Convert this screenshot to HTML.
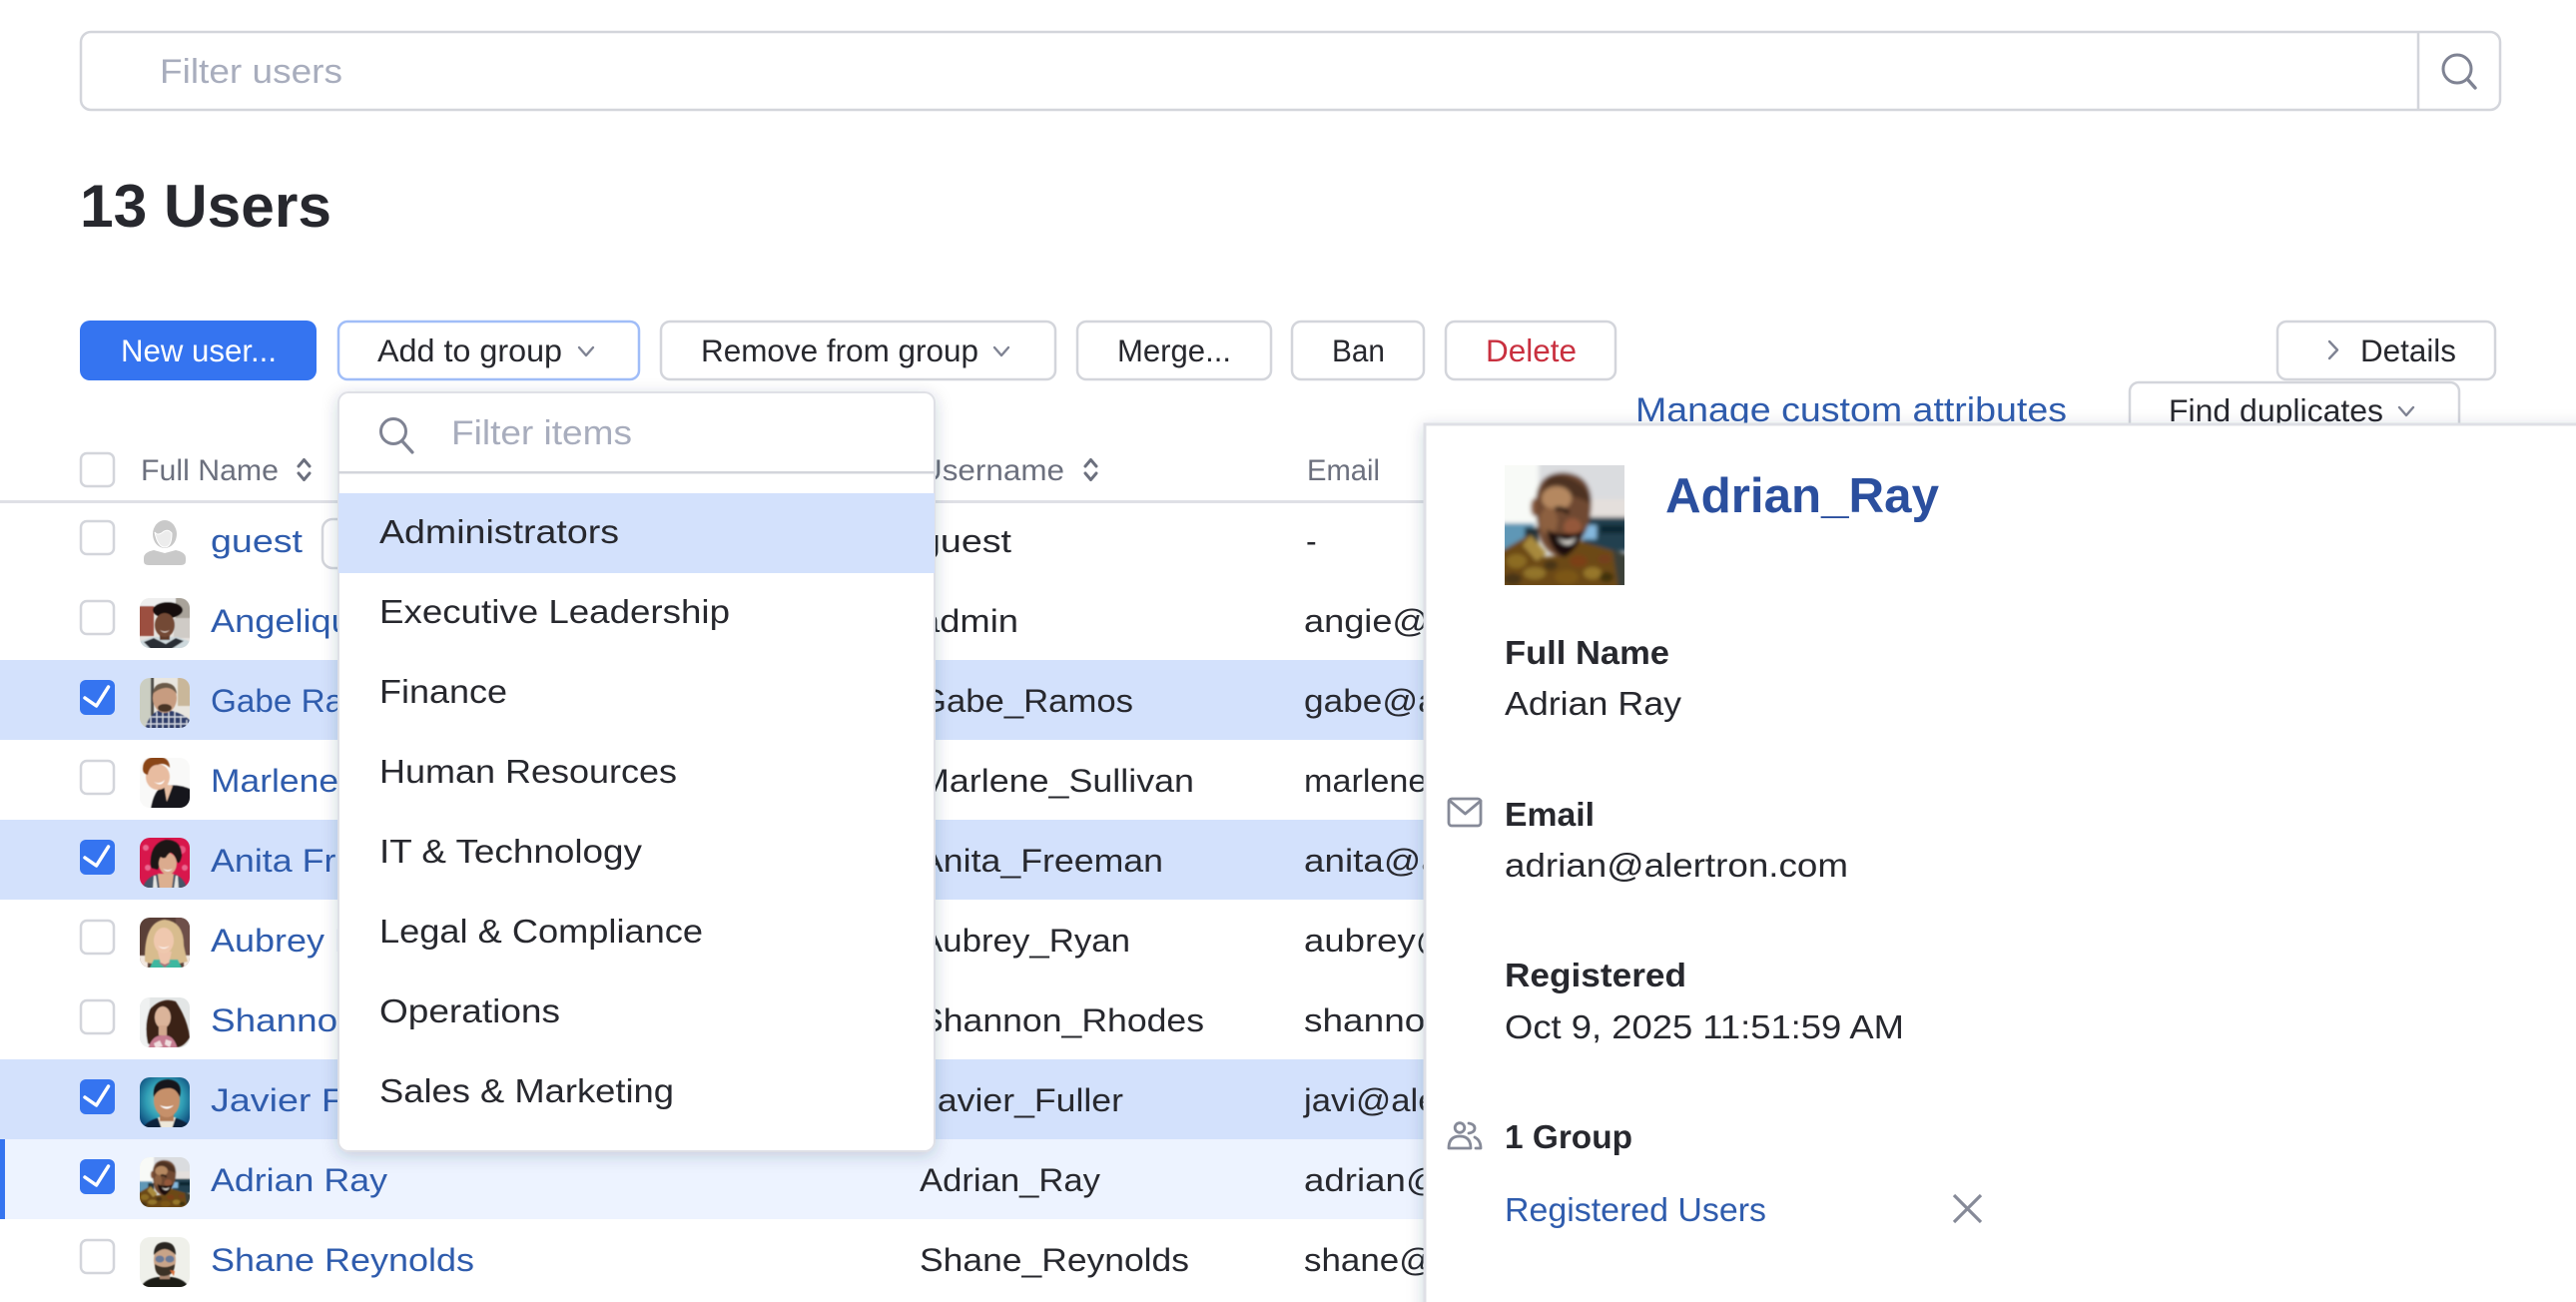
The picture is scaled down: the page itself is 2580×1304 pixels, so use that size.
<!DOCTYPE html>
<html><head><meta charset="utf-8"><title>13 Users</title>
<style>
html,body{margin:0;padding:0;background:#fff;width:2580px;height:1304px;overflow:hidden}
svg{display:block}
text{font-family:"Liberation Sans",sans-serif;fill:#27282e;font-size:32px}
.l{fill:#2f5cad}
.h{fill:#6c707e;font-size:30px}
.p{fill:#a8adbd;font-size:34px}
.b{font-weight:700}
.t{font-size:31.5px}
.d{font-size:33px}
.btn{fill:#fff;stroke:#d3d5db;stroke-width:2.5}
.cb{fill:#fff;stroke:#d3d5db;stroke-width:2.5}
.ck{fill:none;stroke:#fff;stroke-width:3.5;stroke-linecap:round;stroke-linejoin:round}
.ic{fill:none;stroke:#7f8393;stroke-width:2.4;stroke-linecap:round;stroke-linejoin:round}
.ig{fill:none;stroke:#868a98;stroke-width:2.8;stroke-linecap:round;stroke-linejoin:round}
</style></head><body>
<svg width="2580" height="1304" viewBox="0 0 2580 1304" xmlns="http://www.w3.org/2000/svg">
<defs>
<clipPath id="rc"><rect width="50" height="50" rx="10"/></clipPath>
<clipPath id="sq"><rect width="120" height="120"/></clipPath>
<clipPath id="r2"><rect width="120" height="120" rx="24"/></clipPath>
<radialGradient id="jv" cx=".5" cy=".45" r=".68"><stop offset="0" stop-color="#8ad8d2"/><stop offset=".55" stop-color="#2f9db4"/><stop offset="1" stop-color="#0a3f74"/></radialGradient>
<filter id="sh" x="-10%" y="-10%" width="120%" height="120%"><feDropShadow dx="0" dy="4" stdDeviation="8" flood-color="#2a3350" flood-opacity=".2"/></filter>
<filter id="bl" x="-10%" y="-10%" width="120%" height="120%"><feGaussianBlur stdDeviation="2.2"/></filter>
<filter id="bs" x="-10%" y="-10%" width="120%" height="120%"><feGaussianBlur stdDeviation=".6"/></filter>
<g id="adr"><rect width="120" height="120" fill="#dcdfe2"/><g filter="url(#bl)">
<rect x="-4" y="-4" width="130" height="40" fill="#dadcdf"/>
<rect x="-4" y="-4" width="38" height="66" fill="#f8faf7"/>
<rect x="80" y="34" width="44" height="20" fill="#e4dfdc"/>
<rect x="78" y="52" width="46" height="34" fill="#21404f"/>
<rect x="78" y="60" width="14" height="14" fill="#84b8de"/>
<rect x="96" y="60" width="24" height="8" fill="#0f2530"/>
<rect x="-4" y="58" width="34" height="26" fill="#5f97b6"/>
<rect x="20" y="62" width="14" height="18" fill="#233138"/>
<path d="M-4 124V86L24 70 40 92 56 90 76 76 124 90V124Z" fill="#6c4817"/>
<path d="M108 84L124 90V124H114Z" fill="#3a4038"/>
<path d="M26 70L42 88 32 96 18 80Z" fill="#a88a3c"/>
<ellipse cx="12" cy="96" rx="10" ry="7" fill="#8c6c24"/><ellipse cx="30" cy="108" rx="11" ry="6" fill="#93742a"/><ellipse cx="8" cy="114" rx="9" ry="6" fill="#4a3512"/>
<ellipse cx="46" cy="100" rx="7" ry="5" fill="#4a3412"/><ellipse cx="62" cy="112" rx="12" ry="7" fill="#7c5618"/><ellipse cx="74" cy="96" rx="9" ry="6" fill="#7c4016"/>
<ellipse cx="88" cy="108" rx="9" ry="6" fill="#97772a"/><ellipse cx="100" cy="94" rx="7" ry="5" fill="#74401a"/><ellipse cx="102" cy="112" rx="7" ry="5" fill="#40300f"/>
<ellipse cx="30" cy="42" rx="4" ry="9" fill="#8a5c3e"/>
<path d="M31 38Q31 8 58 7 86 8 87 36 87 58 78 72 68 90 56 92 42 88 36 74 31 58 31 38Z" fill="#704a32"/>
<path d="M44 12Q60 6 78 20 86 28 86 38 70 30 60 30 44 30 36 36 38 20 44 12Z" fill="#4e3222"/>
<ellipse cx="52" cy="33" rx="15" ry="12" fill="#b58860"/>
<ellipse cx="44" cy="56" rx="9" ry="14" fill="#8d6040"/>
<ellipse cx="68" cy="62" rx="9" ry="9" fill="#94593a"/>
<path d="M50 44q8-3 14 4" stroke="#1a0f08" stroke-width="4" fill="none"/>
<path d="M42 64Q52 70 62 68 72 70 80 64 74 84 60 92 46 88 42 64Z" fill="#1c110a"/>
<path d="M52 72Q62 80 72 72 64 86 52 72Z" fill="#f8f4ec"/>
</g></g>
</defs>

<!-- search -->
<rect x="81" y="32" width="2423" height="78" rx="10" class="btn"/>
<line x1="2422" y1="32" x2="2422" y2="110" stroke="#d3d5db" stroke-width="2.5"/>
<circle cx="2461" cy="69" r="14" fill="none" stroke="#7f8393" stroke-width="3"/>
<line x1="2471" y1="79" x2="2479" y2="88" stroke="#7f8393" stroke-width="3.4" stroke-linecap="round"/>
<text x="160" y="83" class="p" textLength="183" lengthAdjust="spacingAndGlyphs">Filter users</text>

<text x="80" y="227" class="b" style="font-size:60px" textLength="252" lengthAdjust="spacingAndGlyphs">13 Users</text>

<!-- buttons -->
<rect x="80" y="321" width="237" height="60" rx="10" fill="#3574f0"/>
<text x="121" y="362" class="t" style="fill:#fff" textLength="156" lengthAdjust="spacingAndGlyphs">New user...</text>
<rect x="339" y="322" width="301" height="58" rx="9" fill="#fff" stroke="#a0bdf8" stroke-width="2.5"/>
<text x="378" y="362" class="t" textLength="185" lengthAdjust="spacingAndGlyphs">Add to group</text>
<path d="M580 348l7 8 7-8" class="ic"/>
<rect x="662" y="322" width="395" height="58" rx="9" class="btn"/>
<text x="702" y="362" class="t" textLength="278" lengthAdjust="spacingAndGlyphs">Remove from group</text>
<path d="M996 348l7 8 7-8" class="ic"/>
<rect x="1079" y="322" width="194" height="58" rx="9" class="btn"/>
<text x="1119" y="362" class="t" textLength="114" lengthAdjust="spacingAndGlyphs">Merge...</text>
<rect x="1294" y="322" width="132" height="58" rx="9" class="btn"/>
<text x="1334" y="362" class="t" textLength="53" lengthAdjust="spacingAndGlyphs">Ban</text>
<rect x="1448" y="322" width="170" height="58" rx="9" class="btn"/>
<text x="1488" y="362" class="t" style="fill:#c9303f" textLength="91" lengthAdjust="spacingAndGlyphs">Delete</text>
<rect x="2281" y="322" width="218" height="58" rx="9" class="btn"/>
<path d="M2333 342l8 8.500-8 8.500" class="ic"/>
<text x="2364" y="362" class="t" textLength="96" lengthAdjust="spacingAndGlyphs">Details</text>
<text x="1638" y="422" class="l" style="font-size:34px" textLength="432" lengthAdjust="spacingAndGlyphs">Manage custom attributes</text>
<rect x="2133" y="383" width="330" height="60" rx="9" class="btn"/>
<text x="2172" y="422" class="t" textLength="215" lengthAdjust="spacingAndGlyphs">Find duplicates</text>
<path d="M2403 408l7 8 7-8" class="ic"/>

<!-- table head -->
<rect x="81" y="454" width="33" height="33" rx="6" class="cb"/>
<text x="141" y="481" class="h" textLength="138" lengthAdjust="spacingAndGlyphs">Full Name</text>
<path d="M299 467l5.500-6.500 5.500 6.500M299 474l5.500 6.500 5.500-6.500" class="ic" style="stroke:#6c707e;stroke-width:3"/>
<text x="921" y="481" class="h" textLength="145" lengthAdjust="spacingAndGlyphs">Username</text>
<path d="M1087 467l5.500-6.500 5.500 6.500M1087 474l5.500 6.500 5.500-6.500" class="ic" style="stroke:#6c707e;stroke-width:3"/>
<text x="1309" y="481" class="h" textLength="73" lengthAdjust="spacingAndGlyphs">Email</text>
<rect x="0" y="501" width="1430" height="3" fill="#dfe0e6"/>

<!-- rows -->
<rect x="0" y="661" width="1430" height="80" fill="#d3e1fc"/>
<rect x="0" y="821" width="1430" height="80" fill="#d3e1fc"/>
<rect x="0" y="1061" width="1430" height="80" fill="#d3e1fc"/>
<rect x="0" y="1141" width="1430" height="80" fill="#edf3ff"/>
<rect x="0" y="1141" width="5" height="80" fill="#3574f0"/>

<rect x="81" y="522" width="33" height="33" rx="6" class="cb"/>
<rect x="81" y="602" width="33" height="33" rx="6" class="cb"/>
<rect x="81" y="762" width="33" height="33" rx="6" class="cb"/>
<rect x="81" y="922" width="33" height="33" rx="6" class="cb"/>
<rect x="81" y="1002" width="33" height="33" rx="6" class="cb"/>
<rect x="81" y="1242" width="33" height="33" rx="6" class="cb"/>
<rect x="80" y="681" width="35" height="35" rx="6" fill="#3574f0"/><path d="M85 699l11.500 8 12-19" class="ck"/>
<rect x="80" y="841" width="35" height="35" rx="6" fill="#3574f0"/><path d="M85 859l11.500 8 12-19" class="ck"/>
<rect x="80" y="1081" width="35" height="35" rx="6" fill="#3574f0"/><path d="M85 1099l11.500 8 12-19" class="ck"/>
<rect x="80" y="1161" width="35" height="35" rx="6" fill="#3574f0"/><path d="M85 1179l11.500 8 12-19" class="ck"/>

<!-- guest icon -->
<path d="M144 559q0-6 10-8l11 3 11-3q10 2 10 8v3q0 4-5 4h-32q-5 0-5-4z" fill="#c9c9c9"/>
<ellipse cx="165" cy="535" rx="12" ry="14" fill="#c9c9c9"/>
<path d="M155 533q3 4 8 0t9 1q0 14-7 14t-10-15z" fill="#ececec" stroke="#fff" stroke-width="1"/>

<!-- avatars -->
<g transform="translate(140 599)"><g clip-path="url(#rc)"><rect width="50" height="50" fill="#e6e2de"/><g filter="url(#bs)">
<rect x="-2" y="-2" width="54" height="10" fill="#eeeeee"/><rect x="-2" y="8" width="16" height="30" fill="#9c4f40"/><rect x="36" y="-2" width="16" height="22" fill="#a9a39a"/><rect x="34" y="20" width="18" height="20" fill="#cfcbc6"/>
<path d="M-2 52V44L12 39 38 39 52 44V52Z" fill="#cdd8dc"/><path d="M4 44l10-4 12 6 10-6 8 3-14 9H12z" fill="#2a2d36"/><rect x="20" y="30" width="10" height="12" fill="#5e3a2a"/>
<ellipse cx="28" cy="12" rx="15" ry="8" fill="#15110f"/><ellipse cx="25" cy="27" rx="10" ry="12" fill="#734a36"/><path d="M20 32q5 3 10 0-5 5-10 0z" fill="#e9d8cc"/>
</g></g></g>
<g transform="translate(140 679)"><g clip-path="url(#rc)"><rect width="50" height="50" fill="#e9e6df"/><g filter="url(#bs)">
<rect x="-2" y="-2" width="13" height="54" fill="#cbcec2"/><rect x="11" y="-2" width="3" height="40" fill="#4e4e48"/><rect x="38" y="-2" width="14" height="30" fill="#c9b79a"/>
<path d="M5 52Q8 38 18 33h14Q44 36 52 44V52Z" fill="#2f3e6a"/><path d="M11 52V38M17 52V34M23 52V34M29 52V34M35 52V34M41 52V38M47 52V42M6 46H52M12 39H46" stroke="#d7dce6" stroke-width="1.200"/>
<ellipse cx="25" cy="20" rx="12" ry="15" fill="#c79c80"/><path d="M13 16Q14 5 25 5T37 16Q32 9 25 10T13 16Z" fill="#6a5a48"/><ellipse cx="25" cy="30" rx="7" ry="4" fill="#4a3628"/>
</g></g></g>
<g transform="translate(140 759)"><g clip-path="url(#rc)"><rect width="50" height="50" fill="#f9f9f8"/><g filter="url(#bs)">
<path d="M11 52Q14 32 24 28 40 26 52 32V52Z" fill="#17171a"/><path d="M24 26l3 18 6-16z" fill="#e6bfa4"/>
<ellipse cx="18" cy="19" rx="12" ry="13" fill="#e8bca0"/><path d="M3 11Q3 0 15 -1 30 -2 30 10 25 4 18 7 10 7 8 17 3 16 3 11Z" fill="#8a4418"/><path d="M14 24q6 3 11-2-3 8-11 2z" fill="#fff"/>
</g></g></g>
<g transform="translate(140 839)"><g clip-path="url(#rc)"><rect width="50" height="50" fill="#d8174c"/><g filter="url(#bs)">
<circle cx="6" cy="10" r="3" fill="#ea6890"/><circle cx="42" cy="12" r="4" fill="#e85580"/><circle cx="8" cy="30" r="3" fill="#ea6890"/><circle cx="45" cy="30" r="3" fill="#ea6890"/>
<path d="M2 52Q6 40 16 37h20Q44 40 48 52Z" fill="#465767"/><path d="M14 38h2l2 14h-5zM36 38h2l1 14h-5z" fill="#e6e6e2"/><path d="M18 36h16l-2 16H20z" fill="#dcb090"/>
<path d="M11 30Q9 6 26 2 42 2 42 18 40 28 37 24 34 12 24 14 21 26 18 32Z" fill="#1e1412"/><ellipse cx="28" cy="26" rx="9" ry="11" fill="#dbab8e"/><path d="M23 31q5 3 10 0-5 5-10 0z" fill="#fff"/><path d="M19 14Q26 8 36 14 30 13 26 20 20 22 19 14Z" fill="#1e1412"/>
</g></g></g>
<g transform="translate(140 919)"><g clip-path="url(#rc)"><rect width="50" height="50" fill="#5a4038"/><g filter="url(#bs)">
<rect x="36" y="-2" width="16" height="44" fill="#6e5048"/><rect x="-2" y="38" width="10" height="14" fill="#f2e8e0"/><rect x="44" y="38" width="8" height="14" fill="#f2e8e0"/>
<path d="M5 44Q4 4 25 2 44 4 44 28 46 38 48 44L40 46H10Z" fill="#d8bc8e"/><path d="M9 52l5-10h24l5 10z" fill="#3db8a0"/><path d="M18 34h14l-3 12-4 4-4-4z" fill="#eec4ac"/><path d="M18 44l7 6 7-6-7 3z" fill="#a6707a"/>
<ellipse cx="24" cy="23" rx="10" ry="13" fill="#efc8ae"/><path d="M18 28q6 4 12 0-6 6-12 0z" fill="#fff"/>
</g></g></g>
<g transform="translate(140 999)"><g clip-path="url(#rc)"><rect width="50" height="50" fill="#e3e6e6"/><g filter="url(#bs)">
<rect x="-2" y="-2" width="12" height="54" fill="#eff1f1"/>
<path d="M8 46Q4 28 10 12 22 -1 36 4 48 22 50 40 44 50 36 50H14Z" fill="#3a2218"/><path d="M8 52Q12 38 22 38 34 36 38 52Z" fill="#c67c90"/><path d="M14 46l6-3 3 6-7 2zM26 42l6 2-2 6-5-3z" fill="#f0dfe0"/>
<ellipse cx="23" cy="20" rx="8" ry="11" fill="#dbb49a"/><rect x="19" y="28" width="8" height="10" fill="#d2a88e"/>
</g></g></g>
<g transform="translate(140 1079)"><g clip-path="url(#rc)"><rect width="50" height="50" fill="url(#jv)"/><g filter="url(#bs)">
<path d="M2 52Q8 42 22 40h10Q44 42 52 50V52Z" fill="#10203a"/><path d="M18 40h18l-4 12H22z" fill="#eee8da"/><rect x="20" y="32" width="14" height="12" fill="#b07c58"/>
<ellipse cx="27" cy="23" rx="13" ry="17" fill="#c6906a"/><path d="M14 20Q12 3 28 2 44 3 40 20 36 10 28 11 18 11 14 20Z" fill="#14141c"/><path d="M20 28q7 3 14 0-7 7-14 0z" fill="#fff"/>
</g></g></g>
<g transform="translate(140 1159) scale(.41667)"><g clip-path="url(#r2)"><use href="#adr"/></g></g>
<g transform="translate(140 1239)"><g clip-path="url(#rc)"><rect width="50" height="50" fill="#eff0ea"/><g filter="url(#bs)">
<path d="M0 52Q4 42 18 40h14Q46 42 50 52Z" fill="#1a1a18"/><rect x="20" y="32" width="10" height="10" fill="#a88670"/>
<ellipse cx="25" cy="23" rx="11" ry="15" fill="#c9a488"/><path d="M14 18Q14 5 25 5T36 18Q30 12 25 12T14 18Z" fill="#2a2622"/><path d="M15 27Q25 33 35 27 35 38 25 39T15 27Z" fill="#3a3028"/>
<ellipse cx="20" cy="22" rx="4.500" ry="3.500" fill="#6a7a98"/><ellipse cx="30" cy="22" rx="4.500" ry="3.500" fill="#6a7a98"/><path d="M30 33l5 1-1 5z" fill="#d8703a"/>
</g></g></g>

<!-- names -->
<rect x="323" y="520" width="40" height="49" rx="10" class="btn"/>
<text x="211" y="553" class="l" textLength="92" lengthAdjust="spacingAndGlyphs">guest</text>
<text x="211" y="633" class="l" textLength="270" lengthAdjust="spacingAndGlyphs">Angelique Walsh</text>
<text x="211" y="713" class="l" textLength="196" lengthAdjust="spacingAndGlyphs">Gabe Ramos</text>
<text x="211" y="793" class="l" textLength="262" lengthAdjust="spacingAndGlyphs">Marlene Sullivan</text>
<text x="211" y="873" class="l" textLength="235" lengthAdjust="spacingAndGlyphs">Anita Freeman</text>
<text x="211" y="953" class="l" textLength="208" lengthAdjust="spacingAndGlyphs">Aubrey Ryan</text>
<text x="211" y="1033" class="l" textLength="285" lengthAdjust="spacingAndGlyphs">Shannon Rhodes</text>
<text x="211" y="1113" class="l" textLength="205" lengthAdjust="spacingAndGlyphs">Javier Fuller</text>
<text x="211" y="1193" class="l" textLength="177" lengthAdjust="spacingAndGlyphs">Adrian Ray</text>
<text x="211" y="1273" class="l" textLength="264" lengthAdjust="spacingAndGlyphs">Shane Reynolds</text>

<!-- usernames -->
<text x="921" y="553" textLength="92" lengthAdjust="spacingAndGlyphs">guest</text>
<text x="921" y="633" textLength="99" lengthAdjust="spacingAndGlyphs">admin</text>
<text x="921" y="713" textLength="214" lengthAdjust="spacingAndGlyphs">Gabe_Ramos</text>
<text x="921" y="793" textLength="275" lengthAdjust="spacingAndGlyphs">Marlene_Sullivan</text>
<text x="921" y="873" textLength="244" lengthAdjust="spacingAndGlyphs">Anita_Freeman</text>
<text x="921" y="953" textLength="211" lengthAdjust="spacingAndGlyphs">Aubrey_Ryan</text>
<text x="921" y="1033" textLength="285" lengthAdjust="spacingAndGlyphs">Shannon_Rhodes</text>
<text x="921" y="1113" textLength="204" lengthAdjust="spacingAndGlyphs">Javier_Fuller</text>
<text x="921" y="1193" textLength="181" lengthAdjust="spacingAndGlyphs">Adrian_Ray</text>
<text x="921" y="1273" textLength="270" lengthAdjust="spacingAndGlyphs">Shane_Reynolds</text>

<!-- emails -->
<text x="1308" y="553">-</text>
<text x="1306" y="633" textLength="326" lengthAdjust="spacingAndGlyphs">angie@alertron.com</text>
<text x="1306" y="713" textLength="310" lengthAdjust="spacingAndGlyphs">gabe@alertron.com</text>
<text x="1306" y="793" textLength="348" lengthAdjust="spacingAndGlyphs">marlene@alertron.com</text>
<text x="1306" y="873" textLength="322" lengthAdjust="spacingAndGlyphs">anita@alertron.com</text>
<text x="1306" y="953" textLength="352" lengthAdjust="spacingAndGlyphs">aubrey@alertron.com</text>
<text x="1306" y="1033" textLength="385" lengthAdjust="spacingAndGlyphs">shannon@alertron.com</text>
<text x="1306" y="1113" textLength="280" lengthAdjust="spacingAndGlyphs">javi@alertron.com</text>
<text x="1306" y="1193" textLength="343" lengthAdjust="spacingAndGlyphs">adrian@alertron.com</text>
<text x="1306" y="1273" textLength="325" lengthAdjust="spacingAndGlyphs">shane@alertron.com</text>

<!-- dropdown -->
<rect x="339" y="393" width="597" height="760" rx="10" fill="#fff" stroke="#dfe0e6" stroke-width="2" filter="url(#sh)"/>
<circle cx="394" cy="432" r="12.500" fill="none" stroke="#7f8393" stroke-width="3"/>
<line x1="403" y1="442" x2="413" y2="453" stroke="#7f8393" stroke-width="3.200" stroke-linecap="round"/>
<text x="452" y="445" class="p" textLength="181" lengthAdjust="spacingAndGlyphs">Filter items</text>
<rect x="339" y="472" width="597" height="2.500" fill="#d3d5db"/>
<rect x="339" y="494" width="597" height="80" fill="#d3e1fc"/>
<text x="380" y="544" class="d" textLength="240" lengthAdjust="spacingAndGlyphs">Administrators</text>
<text x="380" y="624" class="d" textLength="351" lengthAdjust="spacingAndGlyphs">Executive Leadership</text>
<text x="380" y="704" class="d" textLength="128" lengthAdjust="spacingAndGlyphs">Finance</text>
<text x="380" y="784" class="d" textLength="298" lengthAdjust="spacingAndGlyphs">Human Resources</text>
<text x="380" y="864" class="d" textLength="263" lengthAdjust="spacingAndGlyphs">IT &amp; Technology</text>
<text x="380" y="944" class="d" textLength="324" lengthAdjust="spacingAndGlyphs">Legal &amp; Compliance</text>
<text x="380" y="1024" class="d" textLength="181" lengthAdjust="spacingAndGlyphs">Operations</text>
<text x="380" y="1104" class="d" textLength="295" lengthAdjust="spacingAndGlyphs">Sales &amp; Marketing</text>

<!-- panel -->
<rect x="1427" y="425" width="1170" height="900" fill="#fff" stroke="#dfe0e6" stroke-width="3" filter="url(#sh)"/>
<g transform="translate(1507 466)"><g clip-path="url(#sq)"><use href="#adr"/></g></g>
<text x="1668" y="513" class="b" style="fill:#2b4f9e;font-size:49px" textLength="274" lengthAdjust="spacingAndGlyphs">Adrian_Ray</text>

<text x="1507" y="665" class="b d" textLength="165" lengthAdjust="spacingAndGlyphs">Full Name</text>
<text x="1507" y="716" class="d" textLength="177" lengthAdjust="spacingAndGlyphs">Adrian Ray</text>

<rect x="1451" y="800" width="32" height="27" rx="3" class="ig"/>
<path d="M1452 802l15.500 13 15.500-13" class="ig"/>
<text x="1507" y="827" class="b d" textLength="90" lengthAdjust="spacingAndGlyphs">Email</text>
<text x="1507" y="878" class="d" textLength="344" lengthAdjust="spacingAndGlyphs">adrian@alertron.com</text>

<text x="1507" y="988" class="b d" textLength="182" lengthAdjust="spacingAndGlyphs">Registered</text>
<text x="1507" y="1040" class="d" textLength="400" lengthAdjust="spacingAndGlyphs">Oct 9, 2025 11:51:59 AM</text>

<circle cx="1462" cy="1129.500" r="4.800" class="ig"/>
<path d="M1451 1150q0-12 11-12t11 12z" class="ig"/>
<path d="M1471 1125q6 1 6 5t-6 5M1477 1139q6 3 6 11h-5" class="ig"/>
<text x="1507" y="1150" class="b d" textLength="128" lengthAdjust="spacingAndGlyphs">1 Group</text>
<text x="1507" y="1223" class="l d" textLength="262" lengthAdjust="spacingAndGlyphs">Registered Users</text>
<path d="M1957 1197l27 27M1984 1197l-27 27" fill="none" stroke="#868a98" stroke-width="3.200"/>
</svg>
</body></html>
